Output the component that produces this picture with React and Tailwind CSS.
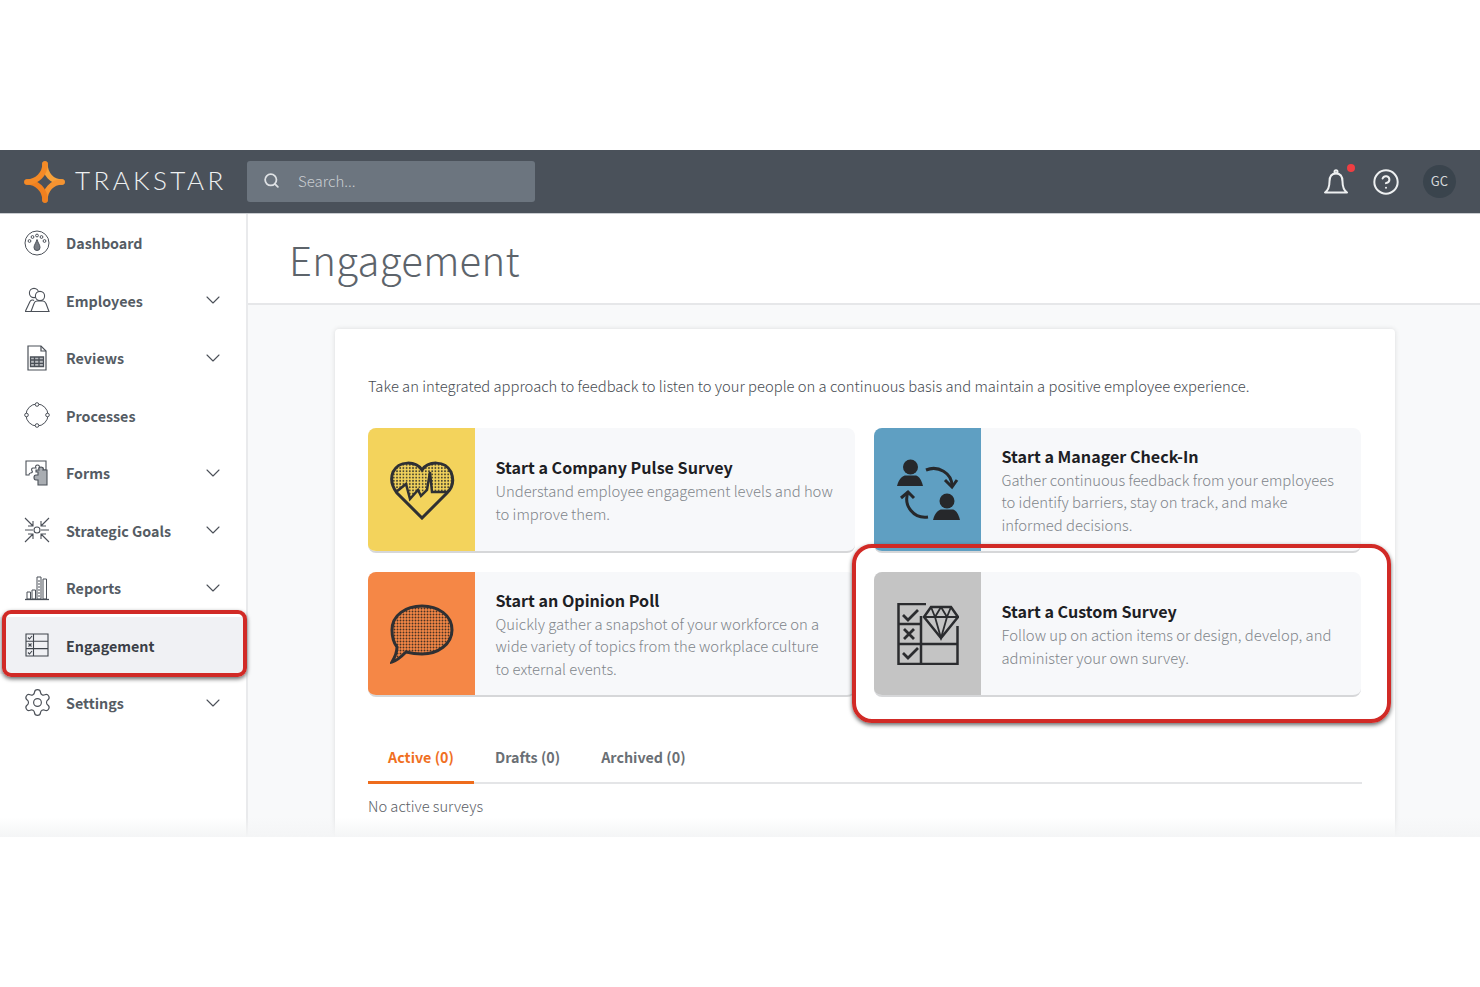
import { ChevronDown, CircleHelp, Search, Settings } from "lucide-react";

const font = { fontFamily: '"Noto Sans CJK SC", "Noto Sans", sans-serif' };

function Logo() {
  return (
    <svg width="44" height="44" viewBox="0 0 44 44" fill="none" strokeWidth="5.500" strokeLinecap="round">
      <path d="M22 4C22 14 29 22 39 22" stroke="#f7a23b" />
      <path d="M39 22C29 22 22 30 22 40" stroke="#f59331" />
      <path d="M22 40C22 30 14 22 4 22" stroke="#f0801f" />
      <path d="M4 22C14 22 22 14 22 4" stroke="#f58a26" />
    </svg>
  );
}

function BellIcon() {
  return (
    <svg width="26" height="26" viewBox="0 0 26 26" fill="none" stroke="currentColor" strokeWidth="2" strokeLinejoin="round">
      <circle cx="13" cy="2.800" r="1.500" />
      <path d="M13 4.500C8.500 4.500 6.500 8 6.500 12.500c0 5-1 8.500-4.500 11h22c-3.500-2.500-4.500-6-4.500-11C19.500 8 17.500 4.500 13 4.500Z" />
    </svg>
  );
}

function DashboardIcon() {
  return (
    <svg width="26" height="26" viewBox="0 0 26 26" fill="none" stroke="#4b5058" strokeWidth="1">
      <circle cx="13" cy="13" r="12" />
      <circle cx="13" cy="5.500" r="1.400" />
      <circle cx="8.500" cy="7" r="1.400" />
      <circle cx="17.500" cy="7" r="1.400" />
      <circle cx="5.500" cy="11" r="1.400" />
      <circle cx="20.500" cy="11" r="1.400" />
      <path d="M13 9.500C14 13 16 15 16 17.500a3 3 0 0 1-6 0C10 15 12 13 13 9.500Z" fill="#777c83" />
    </svg>
  );
}

function EmployeesIcon() {
  return (
    <svg width="26" height="26" viewBox="0 0 26 26" fill="none" stroke="#4b5058" strokeWidth="1.100">
      <circle cx="10" cy="6" r="4.600" />
      <circle cx="16" cy="9" r="4.600" fill="#fff" />
      <path d="M1.500 24 6 14.500c1-1.500 3-2 4-1" />
      <path d="M1 24.500h24L22 16.500c-1-2-2.500-2.500-3-2.500h-6c-1 0-2.500 1-3 2.500L7 24.500" fill="#fff" />
    </svg>
  );
}

function ReviewsIcon() {
  return (
    <svg width="26" height="26" viewBox="0 0 26 26" fill="none" stroke="#4b5058" strokeWidth="1.200">
      <path d="M4 1h13l5 5v19H4Z" />
      <path d="M17 1v5h5" />
      <path d="M6.500 12h13v9.500h-13ZM6.500 15h13M6.500 18.300h13M10.500 12v9.500M15 12v9.500" strokeWidth="1.300" fill="#b9bcc0" />
    </svg>
  );
}

function ProcessesIcon() {
  return (
    <svg width="26" height="26" viewBox="0 0 26 26" fill="none" stroke="#4b5058" strokeWidth="1">
      <circle cx="13" cy="13" r="11" />
      <circle cx="13" cy="2.500" r="1.800" fill="#fff" />
      <circle cx="13" cy="23.500" r="1.800" fill="#fff" />
      <circle cx="2.500" cy="13" r="1.800" fill="#fff" />
      <circle cx="23.500" cy="13" r="1.800" fill="#fff" />
    </svg>
  );
}

function FormsIcon() {
  return (
    <svg width="26" height="26" viewBox="0 0 26 26" fill="none" stroke="#4b5058" strokeWidth="1.100">
      <path d="M2 1h20v9h-3v-2h-4c1-2 0-3-1.500-3S11 6 12 8H9c-1 0-2 1-1 3 1 1 0 2-1.500 2S5 14 5 15H2Z" />
      <path d="M12 10h3c-1-2 1-3 2-3s3 1 2 3h4v15H14v-5h-2c-1 0-2-1-2-2.500s1-2.500 2-2.500h2v-3h-2Z" fill="#a9adb2" />
    </svg>
  );
}

function GoalsIcon() {
  return (
    <svg width="26" height="26" viewBox="0 0 26 26" fill="none" stroke="#4b5058" strokeWidth="1.100">
      <circle cx="13" cy="13" r="3" />
      <path d="M1 1l8 8M9 4v5H4M25 1l-8 8M17 4v5h5M1 25l8-8M4 17h5v5M25 25l-8-8M22 17h-5v5M1 13h8M17 13h8" />
    </svg>
  );
}

function ReportsIcon() {
  return (
    <svg width="26" height="26" viewBox="0 0 26 26" fill="none" stroke="#4b5058" strokeWidth="1">
      <path d="M1 24.500h24" strokeWidth="1.300" />
      <path d="M3 24v-7h3.500v7ZM8 24v-9h3.500v9ZM13 24V2h4v22ZM19 24V4h3.500v20Z" />
      <path d="M14 6h2M14 9h2M14 12h2M14 15h2M14 18h2M14 21h2" />
    </svg>
  );
}

function EngagementIcon() {
  return (
    <svg width="24" height="24" viewBox="0 0 24 24" fill="none" stroke="#3f444b" strokeWidth="1.100">
      <path d="M1 1h22v22H1ZM1 8.300h22M1 15.600h22M8.500 1v22" />
      <path d="M3 4.500l1.500 1.500 2.500-3M3 19.500l1.500 1.500 2.500-3M3.500 10.500l3 3M6.500 10.500l-3 3" />
    </svg>
  );
}

function HeartIcon() {
  return (
    <svg width="66" height="60" viewBox="0 0 66 60" fill="none" stroke="#2f3033" strokeWidth="3">
      <defs>
        <pattern id="dotsY" width="3.200" height="3.200" patternUnits="userSpaceOnUse">
          <circle cx="1.600" cy="1.600" r="0.950" fill="#4a4630" stroke="none" />
        </pattern>
      </defs>
      <path d="M8 33 18 24 21 39 29 30 32 36 38 30 41 12 43 32 58 32C62 29 66 22 62 12 56 0 39 1 33 10 27 1 10 0 4 12 0 22 5 29 8 33Z" fill="url(#dotsY)" stroke="none" />
      <path d="M33 10C27 1 10 0 4 12 0 22 5 29 8 33L33 58 58 33C62 29 66 22 62 12 56 0 39 1 33 10Z" />
      <path d="M7 32 17 24 21 39 29 30 32 36 38 30 41 12 43 32 59 32" strokeWidth="2.500" />
    </svg>
  );
}

function BubbleIcon() {
  return (
    <svg width="64" height="60" viewBox="0 0 64 60" fill="none" stroke="#2f3033" strokeWidth="3">
      <defs>
        <pattern id="dotsO" width="3" height="3" patternUnits="userSpaceOnUse">
          <circle cx="1.500" cy="1.500" r="0.950" fill="#4a3324" stroke="none" />
        </pattern>
      </defs>
      <path d="M32 2C48 2 62 11 62 26 62 40 48 50 32 50 26 50 20 49 16 48 12 52 7 57 2 58 5 53 7 47 7 43 3 38 2 32 2 26 2 11 16 2 32 2Z" fill="url(#dotsO)" />
    </svg>
  );
}

function CheckInIcon() {
  return (
    <svg width="64" height="62" viewBox="0 0 64 62" fill="none" stroke="#26282b" strokeWidth="3">
      <circle cx="14.500" cy="8" r="7.500" fill="#26282b" stroke="none" />
      <path d="M1 27C3 19 7 16.500 10 16.500h9c3 0 6 2.500 8 10.500Z" fill="#26282b" stroke="none" />
      <circle cx="51" cy="42" r="7.500" fill="#26282b" stroke="none" />
      <path d="M37 61C39 53 43 50.500 46 50.500h10c3 0 6 2.500 8 10.500Z" fill="#26282b" stroke="none" />
      <path d="M30 11C42 6 56 14 56 27" />
      <path d="M49 21l7 7 5-7" />
      <path d="M32 58C18 60 7 47 12 33" />
      <path d="M5 39l7-6 6 6" />
    </svg>
  );
}

function SurveyIcon() {
  return (
    <svg width="62" height="62" viewBox="0 0 62 62" fill="none" stroke="#2b2c2f" strokeWidth="2.500">
      <path d="M29 1H1.500v60h59V23" />
      <path d="M1.500 21H24M24 41h36.500M1.500 41H24M24 13v48" />
      <path d="M6 12l5 5 10-10M6 50l5 5 10-10" strokeWidth="2.800" />
      <path d="M7 26l10 10M17 26 7 36" strokeWidth="2.800" />
      <path d="M34 4h20l7 10-17 21L27 14Z" fill="#c4c4c4" />
      <path d="M27 14h34M34 4l4 10 6 21 6-21 4-10M44 4l-6 10M44 4l6 10" strokeWidth="1.800" />
    </svg>
  );
}

const navItems = [
  { label: "Dashboard", icon: <DashboardIcon /> },
  { label: "Employees", icon: <EmployeesIcon />, more: true },
  { label: "Reviews", icon: <ReviewsIcon />, more: true },
  { label: "Processes", icon: <ProcessesIcon /> },
  { label: "Forms", icon: <FormsIcon />, more: true },
  { label: "Strategic Goals", icon: <GoalsIcon />, more: true },
  { label: "Reports", icon: <ReportsIcon />, more: true },
  { label: "Engagement", icon: <EngagementIcon />, active: true },
  { label: "Settings", icon: <Settings size={31} strokeWidth={0.9} className="shrink-0 text-[#4b5058]" />, more: true },
];

function Tile({ color, edge, icon, title, lines }) {
  return (
    <div className="flex h-[125px] overflow-hidden rounded-lg border-b-2 border-[#d6d7d9] bg-[#f7f8fa]">
      <div className={`-mb-[2px] flex w-[107px] shrink-0 items-center justify-center border-b-2 ${color} ${edge}`}>{icon}</div>
      <div className="flex flex-col justify-center pl-[20.500px]">
        <div className="text-[16.100px] leading-[26px] font-semibold text-[#1d2024]">{title}</div>
        {lines.map((line) => (
          <div key={line} className="text-[14.800px] leading-[22.500px] font-light whitespace-nowrap text-[#80858a]">
            {line}
          </div>
        ))}
      </div>
    </div>
  );
}

export default function App() {
  return (
    <div className="h-[987px] bg-white pt-[150px]" style={font}>
      <div className="relative h-[687px] overflow-hidden">
        <header className="flex h-[64px] items-center border-b border-[#c9ccd0] bg-[#4a515a]">
          <div className="flex w-[247px] items-center pl-[23px]">
            <Logo />
            <span className="-mt-[3px] ml-[8px] text-[26px] leading-none font-light tracking-[3.400px] text-[#eef0f1]" style={{ fontFamily: "Lato, sans-serif" }}>
              TRAKSTAR
            </span>
          </div>
          <div className="flex h-[41px] w-[288px] items-center rounded-[3px] bg-[#6c757f] pl-[16px] text-[#dfe2e5]">
            <Search size={17} strokeWidth={2.500} className="-mt-[2px]" />
            <span className="-mt-[1px] ml-[18px] text-[15px] font-light text-[#c9cdd1]">Search...</span>
          </div>
          <div className="ml-auto flex items-center pr-[24px] text-[#eef0f1]">
            <div className="relative">
              <BellIcon />
              <span className="absolute -top-[5px] right-[-6px] h-[8px] w-[8px] rounded-full bg-[#ef3e42]" />
            </div>
            <CircleHelp size={28} strokeWidth={1.700} className="ml-[23px]" />
            <div className="ml-[23px] flex h-[33px] w-[33px] items-center justify-center rounded-full bg-[#3a444d] pb-px text-[13px] text-[#d5d8da]">GC</div>
          </div>
        </header>

        <div className="flex h-[623px]">
          <nav className="w-[248px] shrink-0 border-r-2 border-[#e9eaec] bg-white">
            <div className="grid auto-rows-[57.500px]">
              {navItems.map((item) => (
                <div key={item.label} className={`flex items-center pr-[21.500px] pl-[24px] ${item.active ? "bg-[#f0f1f4]" : ""}`}>
                  <div className="flex w-[26px] justify-center">{item.icon}</div>
                  <span className={`ml-[16px] text-[14.300px] font-semibold ${item.active ? "text-[#3b4047]" : "text-[#555c64]"}`}>{item.label}</span>
                  {item.more && <ChevronDown size={24} strokeWidth={1.100} className="ml-auto text-[#4b5058]" />}
                </div>
              ))}
            </div>
          </nav>

          <main className="min-w-0 flex-1 bg-[#f8f9fa]">
            <div className="flex h-[91px] items-center border-b-2 border-[#e6e7e9] bg-white pl-[41px]">
              <h1 className="text-[40px] font-light tracking-[0.3px] text-[#5d646b]">Engagement</h1>
            </div>
            <section className="mt-[24px] ml-[87px] h-[600px] w-[1060px] rounded-t bg-white px-[33px] pt-[43px] shadow-[0_0_5px_rgba(0,0,0,0.12)]">
              <p className="text-[14.770px] leading-[28px] font-light whitespace-nowrap text-[#474c52]">
                Take an integrated approach to feedback to listen to your people on a continuous basis and maintain a positive employee experience.
              </p>
              <div className="mt-[28px] grid grid-cols-[487px_487px] gap-x-[19px] gap-y-[19px]">
                <Tile
                  color="bg-[#f3d35c]"
                  edge="border-[#dcb02f]"
                  icon={<HeartIcon />}
                  title="Start a Company Pulse Survey"
                  lines={["Understand employee engagement levels and how", "to improve them."]}
                />
                <Tile
                  color="bg-[#5f9fc2]"
                  edge="border-[#24506b]"
                  icon={<CheckInIcon />}
                  title="Start a Manager Check-In"
                  lines={["Gather continuous feedback from your employees", "to identify barriers, stay on track, and make", "informed decisions."]}
                />
                <Tile
                  color="bg-[#f58746]"
                  edge="border-[#d4601c]"
                  icon={<BubbleIcon />}
                  title="Start an Opinion Poll"
                  lines={["Quickly gather a snapshot of your workforce on a", "wide variety of topics from the workplace culture", "to external events."]}
                />
                <Tile
                  color="bg-[#c4c4c4]"
                  edge="border-[#8f8f8f]"
                  icon={<SurveyIcon />}
                  title="Start a Custom Survey"
                  lines={["Follow up on action items or design, develop, and", "administer your own survey."]}
                />
              </div>
              <div className="mt-[35px] flex h-[52px] items-stretch border-b-2 border-[#e4e5e7] text-[14.300px] font-semibold">
                <div className="-mb-[2px] flex w-[106px] items-center justify-center border-b-[3px] border-[#ee6c1c] text-[#f0701f]">Active (0)</div>
                <div className="ml-[21px] flex items-center text-[#6a6f75]">Drafts (0)</div>
                <div className="ml-[41px] flex items-center text-[#6a6f75]">Archived (0)</div>
              </div>
              <p className="mt-[11px] text-[14.700px] leading-[22px] font-light text-[#5b6066]">No active surveys</p>
            </section>
          </main>
        </div>

        <div className="absolute inset-x-0 bottom-0 h-[20px] bg-gradient-to-b from-transparent to-[#f4f5f6]" />
        <div className="absolute top-[460px] left-[2px] h-[67px] w-[245px] rounded-[9px] border-[4.500px] border-[#d12a26] shadow-[0_2px_4px_rgba(0,0,0,0.6)]" />
        <div className="absolute top-[394px] left-[852px] h-[179px] w-[539px] rounded-[20px] border-[4.500px] border-[#d12a26] shadow-[0_2px_4px_rgba(0,0,0,0.6)]" />
      </div>
    </div>
  );
}
